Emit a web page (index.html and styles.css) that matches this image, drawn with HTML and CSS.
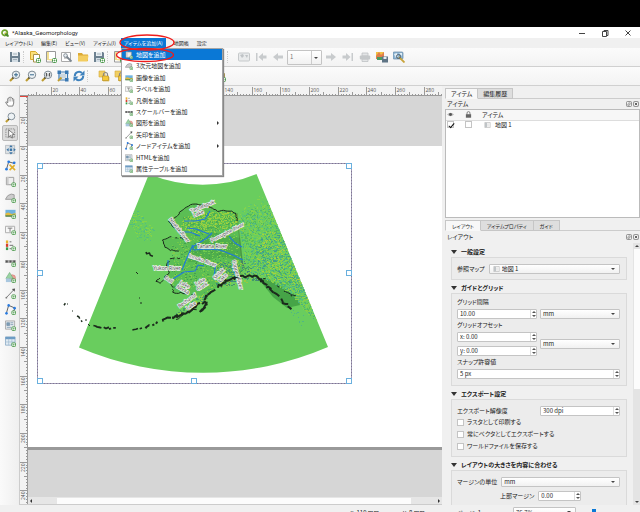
FILE: index.html
```html
<!DOCTYPE html>
<html lang="ja">
<head>
<meta charset="utf-8">
<title>*Alaska_Geomorphology</title>
<link rel="stylesheet" href="styles.css">
</head>
<body>
<svg class="sprite" aria-hidden="true">
  <defs>
    <symbol id="plus" viewBox="0 0 12 12"><rect x="7.5" y="7.5" width="4" height="4" rx="1" fill="#fff" stroke="#4d9a4d"/><path d="M9.5 8.5v2M8.500 9.500h2" stroke="#4d9a4d" stroke-width=".7"/></symbol>
    <symbol id="save" viewBox="0 0 12 12"><path d="M1 1h9l1 1v9H1z" fill="#6d8190"/><rect x="3" y="1" width="6" height="4" fill="#e8eef2"/><rect x="3" y="7" width="6" height="4" fill="#d3dde4"/><path d="M4 8.500h4M4 3h4" stroke="#8b9ba7" stroke-width=".7"/></symbol>
    <symbol id="newdoc" viewBox="0 0 12 12"><path d="M1.500 .5h5l2 2v6h-7z" fill="#fbe07a" stroke="#d9ac2c"/><path d="M4.500 3.500h6v7.500h-6z" fill="#fff" stroke="#a8924b"/><use href="#plus"/></symbol>
    <symbol id="page" viewBox="0 0 12 12"><path d="M1.500 .5h9v10.500h-9z" fill="#fff" stroke="#999"/><path d="M2 9V1h2v7h6v2z" fill="#f2df92"/><use href="#plus"/></symbol>
    <symbol id="manager" viewBox="0 0 12 12"><path d="M.5 1.500h9v9h-9z" fill="#fff" stroke="#aaa"/><path d="M3 4h4v4H3z" fill="#ccc"/><path d="M5 5l5.500 5.500" stroke="#7d8790" stroke-width="1.800"/><circle cx="4.500" cy="4.500" r="1.800" fill="#e8eef2" stroke="#858f98"/></symbol>
    <symbol id="folder" viewBox="0 0 12 12"><path d="M1 2h4l1 1.500h5V10H1z" fill="#dca934"/><path d="M1 4.500h10.500L10.500 10.500H1z" fill="#f3cd60"/></symbol>
    <symbol id="zoom" viewBox="0 0 12 12"><path d="M1 11l3.500-3.500" stroke="#bd9c32" stroke-width="2.200"/><path d="M3.500 8.500l1.200-1.200" stroke="#333" stroke-width="1.500"/><circle cx="7" cy="4.800" r="3.700" fill="#edf2f5" stroke="#7c8993"/></symbol>
    <symbol id="zoomin" viewBox="0 0 12 12"><use href="#zoom"/><path d="M5 4.800h4M7 2.800v4" stroke="#36688d"/></symbol>
    <symbol id="zoomout" viewBox="0 0 12 12"><use href="#zoom"/><path d="M5 4.800h4" stroke="#36688d"/></symbol>
    <symbol id="zoomone" viewBox="0 0 12 12"><use href="#zoom"/><path d="M5.400 3v3.500M8.600 3v3.500M7 3.800v.7M7 5.500v.7" stroke="#333" stroke-width=".9"/></symbol>
    <symbol id="full" viewBox="0 0 12 12"><path d="M3 3.500h6v5H3z" fill="#c9d6e0"/><path d="M3 2h6M3 10h6M2 3v6M10.500 3v6" stroke="#3a79b3" stroke-width="1.200"/><path d="M.5.500h3.500v3.500H.5zM8 .5h3.500v3.500H8zM8 8h3.500v3.500H8z" fill="#3a79b3"/><path d="M1 11l3.500-3.500" stroke="#bd9c32" stroke-width="2"/></symbol>
    <symbol id="refresh" viewBox="0 0 12 12"><path d="M1.800 6A4.200 4.200 0 0 1 9 3M10.200 6A4.200 4.200 0 0 1 3 9" fill="none" stroke="#3f82bd" stroke-width="2"/><path d="M11.500.5v5h-5zM.5 11.500v-5h5z" fill="#3f82bd"/></symbol>
    <symbol id="lock" viewBox="0 0 12 12"><path d="M1 1h6v6H1zM5 7h6v4H5z" fill="#f1cf63" stroke="#d3aa38" stroke-width=".6"/><path d="M5.500 6V4.500a2 2 0 0 1 4 0V6" fill="none" stroke="#888" stroke-width="1.200"/><rect x="4.500" y="6" width="6" height="4.500" fill="#f4c93b" stroke="#b58e29" stroke-width=".6"/></symbol>
    <symbol id="padlock" viewBox="0 0 12 12"><path d="M3.500 6V3.500a2.500 2.500 0 0 1 5 0V6" fill="none" stroke="#777" stroke-width="1.500"/><rect x="1.500" y="5.500" width="9" height="6" fill="#666"/></symbol>
    <symbol id="eye" viewBox="0 0 12 12"><path d="M0 6q6-6 12 0q-6 6-12 0z" fill="#b9b9b9"/><circle cx="6" cy="6" r="2.500" fill="#555"/></symbol>
    <symbol id="atlas" viewBox="0 0 12 12"><rect x=".5" y="2" width="11" height="8" rx="1" fill="#e9ebec" stroke="#c6c9cb"/><path d="M2 4l3-1 1 2-2 2zM7 4h3l-1 3z" fill="#bfc3c6"/></symbol>
    <symbol id="next" viewBox="0 0 12 12"><path d="M1 4.500h5V2l5 4-5 4V7.500H1z" fill="#c8cbcd"/></symbol>
    <symbol id="prev" viewBox="0 0 12 12"><path d="M11 4.500H6V2L1 6l5 4V7.500h5z" fill="#c8cbcd"/></symbol>
    <symbol id="first" viewBox="0 0 12 12"><path d="M11.500 4.500H8V2L3.500 6 8 10V7.500h3.500zM1 2h1.500v8H1z" fill="#c8cbcd"/></symbol>
    <symbol id="last" viewBox="0 0 12 12"><path d="M.5 4.500H4V2l4.500 4L4 10V7.500H.5zM9.500 2H11v8H9.500z" fill="#c8cbcd"/></symbol>
    <symbol id="print" viewBox="0 0 12 12"><path d="M3 2h6v3H3zM3 8h6v2.500H3z" fill="#e3e5e6" stroke="#bfc2c4" stroke-width=".8"/><rect x=".8" y="4.500" width="10.400" height="4" rx="1" fill="#c5c8ca"/></symbol>
    <symbol id="export" viewBox="0 0 12 12"><path d="M0 1h8v7H0z" fill="#f2c143"/><path d="M0 5l3-4 2 3 3-3v7H0z" fill="#e07e4b"/><path d="M1 6h6v3H1z" fill="#4b9c62"/><rect x="6" y="5.500" width="6" height="6" fill="#5f7485"/><rect x="7.500" y="6" width="3" height="2" fill="#e6edf1"/></symbol>
    <symbol id="atlasset" viewBox="0 0 12 12"><rect x="0" y="1" width="10" height="7" rx="1" fill="#8fb6d4" stroke="#6488a3" stroke-width=".7"/><path d="M1 3l3-1 1 3-2 2zM6 2h3v3z" fill="#e1edf4"/><path d="M6 6l5.500 5.500" stroke="#c9a43b" stroke-width="1.800"/><circle cx="5.500" cy="5.500" r="2" fill="none" stroke="#53626d"/></symbol>
    <symbol id="hand" viewBox="0 0 12 12"><path d="M3.500 11L1 7.500q-.6-1.200.6-1L3 7.500V2.800q.7-1 1.300 0L4.800 1.500q.8-.9 1.300 0l.5.500q.8-.8 1.300.2l.3 1.100q1-.6 1.300.4v4L8.500 11z" fill="#fff" stroke="#555" stroke-width=".8"/><path d="M4.500 3v3M6.200 2v4M8 3v3" stroke="#666" stroke-width=".5"/></symbol>
    <symbol id="select" viewBox="0 0 12 12"><rect x="1" y="1" width="9.500" height="9" fill="none" stroke="#888" stroke-dasharray="1.500 1"/><path d="M4 2v8l2-2 1.500 3 1.300-.7L7.500 7.500 10 7z" fill="#fff" stroke="#555" stroke-width=".8"/></symbol>
    <symbol id="move" viewBox="0 0 12 12"><path d="M.5 1.500h10v9H.5z" fill="#dce1e4" stroke="#a4abb0" stroke-width=".7"/><path d="M6.500 1l2 2.500h-4zM6.500 11.500l2-2.500h-4zM1.500 6.300l2.500-2v4zM11.800 6.300l-2.500-2v4zM5.200 5h2.600v2.600H5.200z" fill="#3c74a5"/></symbol>
    <symbol id="editnode" viewBox="0 0 12 12"><path d="M1.500 10.500L4 2l7 2" fill="none" stroke="#555"/><circle cx="4" cy="2" r="1.500" fill="#287ae0"/><circle cx="1.600" cy="10" r="1.500" fill="#287ae0"/><circle cx="10" cy="3" r="1.500" fill="#287ae0"/><path d="M5 5l6 6M10.500 5.500L5 11" stroke="#e0ae2a" stroke-width="1.800"/></symbol>
    <symbol id="map" viewBox="0 0 12 12"><path d="M1.500 1.500h8v8h-8z" fill="#eee" stroke="#999"/><path d="M3 1v8" stroke="#ccc" stroke-width="2"/><use href="#plus"/></symbol>
    <symbol id="map3d" viewBox="0 0 12 12"><path d="M.5 8L3 4q4-3 7-1v5z" fill="#ccc" stroke="#999"/><use href="#plus"/></symbol>
    <symbol id="picture" viewBox="0 0 12 12"><rect x=".5" y="2" width="11" height="7" fill="#6fb2de"/><path d="M.5 6l3-1 4 1.500 4-1V9H.5z" fill="#e2bb40"/><path d="M.5 8h11v1.500H.5z" fill="#4c804f"/><use href="#plus"/></symbol>
    <symbol id="label" viewBox="0 0 12 12"><path d="M.5 2.500h10v7H.5z" fill="#f7f7f7" stroke="#aaa"/><path d="M3 4.500h5M5.500 4.500v4" stroke="#777"/><use href="#plus"/></symbol>
    <symbol id="legend" viewBox="0 0 12 12"><path d="M1 .5h2.500v3H1z" fill="#e8b42c"/><path d="M1 4h2.500v3.500H1z" fill="#d6402b"/><path d="M1 8h2.500v3H1z" fill="#3a9c4b"/><path d="M5 2h2M5 5.800h4M5 9.500h2" stroke="#666"/><use href="#plus"/></symbol>
    <symbol id="scalebar" viewBox="0 0 12 12"><path d="M0 4.500h12v3H0z" fill="#aaa"/><path d="M1 5h2v2H1zM5 5h2v2H5zM9 5h2v2H9z" fill="#555"/><use href="#plus"/></symbol>
    <symbol id="shape" viewBox="0 0 12 12"><circle cx="8" cy="6.500" r="3.500" fill="#eba29a" stroke="#c96a62" stroke-width=".5"/><path d="M5 .5L9 7H1z" fill="#9bd4a4" stroke="#62a56c" stroke-width=".6"/><path d="M1 7h6v4H1z" fill="#a9c7df"/><use href="#plus"/></symbol>
    <symbol id="arrow" viewBox="0 0 12 12"><path d="M1.500 10.500l8.500-9" stroke="#777"/><path d="M11 .5L10.500 4 7.500 1z" fill="#555"/><circle cx="1.500" cy="10.500" r="1" fill="#777"/><use href="#plus"/></symbol>
    <symbol id="node" viewBox="0 0 12 12"><path d="M1.500 10L4 1.500l7 3-2.500 5" fill="none" stroke="#555"/><circle cx="4" cy="1.500" r="1.400" fill="#287ae0"/><circle cx="1.600" cy="10.200" r="1.400" fill="#287ae0"/><circle cx="10.500" cy="4.500" r="1.400" fill="#287ae0"/><use href="#plus"/></symbol>
    <symbol id="html" viewBox="0 0 12 12"><path d="M.5 1h10v9H.5z" fill="#e4e9ed" stroke="#999" stroke-width=".8"/><path d="M2 3h3v3H2zM6 3h3M6 5h3M2 8h5" stroke="#7593ab" fill="#7c9cb5" stroke-width=".8"/><use href="#plus"/></symbol>
    <symbol id="table" viewBox="0 0 12 12"><path d="M.5 1h10.500v9H.5z" fill="#e1ebf3" stroke="#7fa3c1" stroke-width=".8"/><path d="M.5 1h10.500v2.500H.5z" fill="#6d9cc4"/><path d="M4 3v7M7.500 3v7M.5 6.500H11" stroke="#9db9ce" stroke-width=".7"/><use href="#plus"/></symbol>
    <symbol id="mapitem" viewBox="0 0 12 12"><path d="M.5 1h11v10H.5z" fill="#f4f4f4" stroke="#aaa"/><path d="M1 1.500h4v9H1z" fill="#bfc4c7"/><path d="M7 3v6" stroke="#ccc"/></symbol>
    <symbol id="float" viewBox="0 0 12 12"><rect x="1" y="1" width="10" height="10" rx="2" fill="none" stroke="#777" stroke-width="1.500"/><path d="M3.500 6h3v3h-3zM5.500 5.500V3.500h3v3h-2" fill="none" stroke="#777"/></symbol>
    <symbol id="close" viewBox="0 0 12 12"><rect x="1" y="1" width="10" height="10" rx="2" fill="none" stroke="#777" stroke-width="1.500"/><path d="M3.500 3.500l5 5M8.500 3.500l-5 5" stroke="#555" stroke-width="1.800"/></symbol>
  </defs>
</svg>

<div class="app">
  <div class="letterbox"></div>
  <header class="titlebar">
    <svg class="logo" viewBox="0 0 12 12"><circle cx="5.500" cy="5.800" r="4" fill="#fff" stroke="#6fa52f" stroke-width="2.600"/><path d="M5.500 5.500h2.700l3.300 3.500v2.500H9L5.500 8z" fill="#4c8a2c"/><path d="M5.500 5.500h2l1 1-3 1z" fill="#e6c62c"/></svg>
    <h1>*Alaska_Geomorphology</h1>
    <div class="window-buttons">
      <button aria-label="最小化"><svg viewBox="0 0 8 8"><path d="M1 4.500h6" stroke="#444"/></svg></button>
      <button aria-label="元に戻す"><svg viewBox="0 0 8 8"><path d="M1.500 2.500h4v5h-4zM3 2.500v-1h4v5H5.500" fill="none" stroke="#444"/></svg></button>
      <button aria-label="閉じる"><svg viewBox="0 0 8 8"><path d="M1.500 1.500l5 5M6.500 1.500l-5 5" stroke="#444"/></svg></button>
    </div>
  </header>

  <nav class="menubar">
    <button>レイアウト(L)</button>
    <button>編集(E)</button>
    <button>ビュー(V)</button>
    <button>アイテム(I)</button>
    <div class="menu-anchor">
      <button class="open">アイテムを追加(A)</button>
      <div class="dropdown">
        <button class="current"><svg><use href="#map"/></svg>地図を追加</button>
        <button><svg><use href="#map3d"/></svg>3次元地図を追加</button>
        <button><svg><use href="#picture"/></svg>画像を追加</button>
        <button><svg><use href="#label"/></svg>ラベルを追加</button>
        <button><svg><use href="#legend"/></svg>凡例を追加</button>
        <button><svg><use href="#scalebar"/></svg>スケールバーを追加</button>
        <button class="submenu"><svg><use href="#shape"/></svg>図形を追加</button>
        <button><svg><use href="#arrow"/></svg>矢印を追加</button>
        <button class="submenu"><svg><use href="#node"/></svg>ノードアイテムを追加</button>
        <button><svg><use href="#html"/></svg>HTMLを追加</button>
        <button><svg><use href="#table"/></svg>属性テーブルを追加</button>
      </div>
      <svg class="rings" viewBox="0 0 62 30"><ellipse cx="32" cy="8.500" rx="27" ry="7.500"/><ellipse cx="30" cy="21" rx="28.500" ry="6.500"/></svg>
    </div>
    <button>地図帳</button>
    <button>設定</button>
  </nav>

  <div class="toolbar">
    <div class="group">
      <button aria-label="保存"><svg><use href="#save"/></svg></button><i class="sep"></i>
      <button aria-label="新規"><svg><use href="#newdoc"/></svg></button>
      <button aria-label="複製"><svg><use href="#page"/></svg></button>
      <button aria-label="管理"><svg><use href="#manager"/></svg></button>
      <button aria-label="開く"><svg><use href="#folder"/></svg></button>
      <button aria-label="テンプレート保存"><svg><use href="#save"/><use href="#plus"/></svg></button><i class="sep"></i>
      <button aria-label="ページ"><svg><use href="#page"/></svg></button>
      <button aria-label="印刷"><svg><use href="#print"/></svg></button>
      <button aria-label="画像"><svg><use href="#picture"/></svg></button><i class="sep"></i>
      <button aria-label="SVG"><svg><use href="#export"/></svg></button>
      <button aria-label="PDF"><svg><use href="#page"/></svg></button>
      <button aria-label="戻す"><svg><use href="#prev"/></svg></button>
      <button aria-label="やり直す"><svg><use href="#next"/></svg></button><i class="sep wide"></i>
    </div>
    <div class="group atlas">
      <button aria-label="地図帳プレビュー"><svg><use href="#atlas"/></svg></button>
      <button aria-label="最初"><svg><use href="#first"/></svg></button>
      <button aria-label="前"><svg><use href="#prev"/></svg></button>
      <span class="select page-select"><select aria-label="ページ"><option>1</option></select></span>
      <button aria-label="次"><svg><use href="#next"/></svg></button>
      <button aria-label="最後"><svg><use href="#last"/></svg></button>
      <button aria-label="地図帳印刷"><svg><use href="#print"/></svg></button>
      <button aria-label="エクスポート"><svg><use href="#export"/></svg></button>
      <button aria-label="地図帳設定"><svg><use href="#atlasset"/></svg></button>
    </div>
  </div>
  <div class="toolbar">
    <div class="group">
      <button aria-label="拡大"><svg><use href="#zoomin"/></svg></button>
      <button aria-label="縮小"><svg><use href="#zoomout"/></svg></button>
      <button aria-label="100%"><svg><use href="#zoomone"/></svg></button>
      <button aria-label="全体"><svg><use href="#full"/></svg></button>
      <button aria-label="更新"><svg><use href="#refresh"/></svg></button><i class="sep wide"></i>
      <button aria-label="ロック"><svg><use href="#lock"/></svg></button>
      <button aria-label="ロック解除"><svg><use href="#lock"/></svg></button>
      <button aria-label="グループ化"><svg><use href="#shape"/></svg></button>
      <button aria-label="グループ解除"><svg><use href="#shape"/></svg></button><i class="sep"></i>
      <button aria-label="前面へ"><svg><use href="#newdoc"/></svg></button>
      <button aria-label="背面へ"><svg><use href="#newdoc"/></svg></button>
      <button aria-label="整列"><svg><use href="#newdoc"/></svg></button>
      <button aria-label="配布"><svg><use href="#newdoc"/></svg></button>
    </div>
  </div>

  <main class="workspace">
    <div class="tools">
      <button aria-label="パン"><svg><use href="#hand"/></svg></button>
      <button aria-label="ズーム"><svg><use href="#zoom"/></svg></button>
      <button class="active" aria-label="選択"><svg><use href="#select"/></svg></button>
      <button aria-label="内容を移動"><svg><use href="#move"/></svg></button>
      <button aria-label="ノード編集"><svg><use href="#editnode"/></svg></button>
      <button aria-label="地図"><svg><use href="#map"/></svg></button>
      <button aria-label="3D地図"><svg><use href="#map3d"/></svg></button>
      <button aria-label="画像"><svg><use href="#picture"/></svg></button>
      <button aria-label="ラベル"><svg><use href="#label"/></svg></button>
      <button aria-label="凡例"><svg><use href="#legend"/></svg></button>
      <button aria-label="スケールバー"><svg><use href="#scalebar"/></svg></button>
      <button aria-label="図形"><svg><use href="#shape"/></svg></button>
      <button aria-label="矢印"><svg><use href="#arrow"/></svg></button>
      <button aria-label="ノード"><svg><use href="#node"/></svg></button>
      <button aria-label="HTML"><svg><use href="#html"/></svg></button>
      <button aria-label="属性テーブル"><svg><use href="#table"/></svg></button>
    </div>

    <section class="view">
      <svg class="ruler-h" id="ruler-h"></svg>
      <svg class="ruler-v" id="ruler-v"></svg>
      <div class="canvas">
        <div class="paper">
          <svg class="map" viewBox="37 163 315 221">
            <defs>
              <clipPath id="wedge"><path d="M149 174A140 140 0 0 0 256.500 174L328 347A317 317 0 0 1 79 347.500z"/></clipPath>
            </defs>
            <path d="M149 174A140 140 0 0 0 256.500 174L328 347A317 317 0 0 1 79 347.500z" fill="#69cd5e"/>
            <path id="land" d="M237 213L230 211 218 211 212 208 202 205 195 204 187 207 180 212 177 217 169 221 173 227 180 233 183 238 172 237 162 240 165 247 170 250 180 251 180 258 172 258 168 262 167 267 169 273 165 277 172 285 173 293 183 293 193 295 204 296 217 287 228 280 240 277 243 270z" fill="#5bbe54"/>
            <path d="M192 247L212 232 240 238 243 262 220 256 205 262 188 262z" fill="#4fae4c"/>
            <path d="M257 277L273 281 287 290 298 298 300 305 287 308 273 297 265 287z" fill="#46a447"/>
            <g id="terrain" clip-path="url(#wedge)" fill="none" stroke-width="1"></g>
            <path d="M237 213L242 262 246 271" fill="none" stroke="#497d3f" stroke-width=".6"/>
            <g id="coast" fill="none" stroke="#1b2a1c" stroke-linejoin="round"></g>
            <g class="rivers">
              <path d="M182 270L187 258 192 247 199 243 207 238 212 233"/>
              <path d="M192 245L194 250 207 249 220 250 233 255 243 260"/>
              <path d="M173 279L184 272 195 271 198 265 204 266"/>
              <path d="M229 236L235 243 242 247"/>
              <path d="M184 221L196 221 205 219 210 211"/>
              <path d="M178 232L190 232 200 236"/>
              <path d="M187 228L196 229 209 234" />
              <path d="M214 276L216 264M233 268L236 276M168 266v-6"/>
            </g>
            <g class="map-labels">
              <text transform="translate(203 208) rotate(-22)">Teshekpuk</text>
              <text transform="translate(199 215) rotate(-22)">Lake</text>
              <text transform="translate(178 231) rotate(52)">Noatak River</text>
              <text transform="translate(228 234) rotate(-27)">Porcupine River</text>
              <text transform="translate(212 248)">Tanana River</text>
              <text transform="translate(202 262) rotate(20)">Innoko River</text>
              <text transform="translate(167 270)">Yukon River</text>
              <text transform="translate(236 275) rotate(76)">Copper River</text>
              <text transform="translate(168 281) rotate(35)">Dall</text>
              <text transform="translate(184 286) rotate(30)">Lake</text>
              <text transform="translate(182 291) rotate(30)">Nerka</text>
              <text transform="translate(201 283) rotate(-30)">Lake</text>
              <text transform="translate(203 288) rotate(-30)">Clark</text>
              <text transform="translate(220 275) rotate(-45)">Skilak</text>
              <text transform="translate(224 279) rotate(-45)">Lake</text>
              <text transform="translate(188 302) rotate(-35)">Becharof</text>
              <text transform="translate(192 307) rotate(-35)">Lake</text>
            </g>
            <rect x="37.500" y="163.500" width="314" height="220" fill="none" stroke="#c3bcdc"/>
            <rect x="37.500" y="163.500" width="314" height="220" fill="none" stroke="#7d7690" stroke-dasharray="2 1"/>
            <g class="handles">
              <rect x="37.500" y="163.500" width="5" height="5"/><rect x="191.500" y="163.500" width="5" height="5"/><rect x="346.500" y="163.500" width="5" height="5"/>
              <rect x="37.500" y="270.500" width="5" height="5"/><rect x="346.500" y="270.500" width="5" height="5"/>
              <rect x="37.500" y="378.500" width="5" height="5"/><rect x="191.500" y="378.500" width="5" height="5"/><rect x="346.500" y="378.500" width="5" height="5"/>
            </g>
          </svg>
        </div>
      </div>
      <div class="hscroll"><b class="left"></b><i></i><b class="right"></b></div>
    </section>

    <aside class="side">
      <section class="dock items">
        <div class="tabs"><button class="on">アイテム</button><button>編集履歴</button></div>
        <div class="dock-title"><h2>アイテム</h2><button aria-label="分離"><svg><use href="#float"/></svg></button><button aria-label="閉じる"><svg><use href="#close"/></svg></button></div>
        <div class="tree">
          <table>
            <thead><tr><th class="c1"><svg><use href="#eye"/></svg></th><th class="c2"><svg><use href="#padlock"/></svg></th><th>アイテム</th></tr></thead>
            <tbody><tr><td class="c1"><input type="checkbox" checked aria-label="表示"></td><td><input type="checkbox" aria-label="ロック"></td><td><span class="item"><svg><use href="#mapitem"/></svg>地図 1</span></td></tr></tbody>
          </table>
        </div>
      </section>
      <section class="dock props">
        <div class="tabs"><button class="on">レイアウト</button><button>アイテムプロパティ</button><button>ガイド</button></div>
        <div class="dock-title"><h2>レイアウト</h2><button aria-label="分離"><svg><use href="#float"/></svg></button><button aria-label="閉じる"><svg><use href="#close"/></svg></button></div>
        <div class="scroller">
          <form class="form">
            <h3>一般設定</h3>
            <div class="box">
              <div class="row"><label for="ref">参照マップ</label><span class="select grow with-icon"><svg><use href="#mapitem"/></svg><select id="ref"><option>地図 1</option></select></span></div>
            </div>
            <h3>ガイドとグリッド</h3>
            <div class="box grid">
              <label class="cap" for="gs">グリッド間隔</label>
              <span class="spin"><input id="gs" value="10.00"><i></i></span>
              <span class="select"><select aria-label="単位"><option>mm</option></select></span>
              <label class="cap" for="ox">グリッドオフセット</label>
              <div class="stack">
                <span class="spin"><input id="ox" value="x: 0.00"><i></i></span>
                <span class="spin"><input aria-label="y" value="y: 0.00"><i></i></span>
              </div>
              <span class="select"><select aria-label="オフセット単位"><option>mm</option></select></span>
              <label class="cap" for="snap">スナップ許容値</label>
              <span class="spin full"><input id="snap" value="5 px"><i></i></span>
            </div>
            <h3>エクスポート設定</h3>
            <div class="box export">
              <div class="row between"><label for="dpi">エクスポート解像度</label><span class="spin dpi"><input id="dpi" value="300 dpi"><i></i></span></div>
              <label class="check"><input type="checkbox">ラスタとして印刷する</label>
              <label class="check"><input type="checkbox">常にベクタとしてエクスポートする</label>
              <label class="check"><input type="checkbox">ワールドファイルを保存する</label>
            </div>
            <h3>レイアウトの大きさを内容に合わせる</h3>
            <div class="box margins">
              <div class="row"><label for="mu">マージンの単位</label><span class="select grow"><select id="mu"><option>mm</option></select></span></div>
              <div class="row center"><label for="tm">上部マージン</label><span class="spin small"><input id="tm" value="0.00"><i></i></span></div>
            </div>
          </form>
          <div class="vscroll"><b class="up"></b><i></i><b class="down"></b></div>
        </div>
      </section>
    </aside>
  </main>

  <footer class="status">
    <div class="status-inner">
      <span>x: 119 mm</span><span>y: 8 mm</span><span class="page-no">ページ: 1</span>
      <span class="select"><select aria-label="縮尺"><option>76.7%</option></select></span>
      <input type="range" aria-label="ズーム" value="8">
    </div>
  </footer>
</div>
<script src="app.js"></script>
</body>
</html>
```
FILE: styles.css
```css
* { box-sizing: border-box; }
body {
  margin: 0;
  overflow: hidden;
  background: #f0f0f0;
  color: #222;
  font: 6px/8px "Noto Sans CJK JP", "Liberation Sans", sans-serif;
  font-feature-settings: "palt";
}
button, input, select {
  margin: 0;
  padding: 0;
  border: 0;
  background: none;
  color: inherit;
  font: inherit;
  font-feature-settings: inherit;
  white-space: nowrap;
}
h1, h2, h3 { margin: 0; font-size: 6px; font-weight: 400; }
.sprite { position: absolute; width: 0; height: 0; }
.app { display: flex; flex-direction: column; height: 100vh; }
.letterbox { flex: 0 0 27px; background: #000; }

.titlebar { flex: 0 0 11px; display: flex; align-items: center; gap: 3px; padding-left: 1px; background: #fff; }
.titlebar h1 { font-family: Roboto, sans-serif; }
.logo { width: 8px; height: 8px; }
.window-buttons { display: flex; gap: 15px; margin-left: auto; padding-right: 8px; }
.window-buttons button { width: 8px; height: 8px; display: flex; }
.window-buttons svg { width: 8px; height: 8px; }

.menubar { flex: 0 0 10px; display: flex; padding-left: 1px; background: #f0f0f0; }
.menubar > button, .menu-anchor > button { height: 10px; padding: 0 4px; font-size: 5px; line-height: 10px; }
.menu-anchor { position: relative; margin: 0 4px 0 1px; }
.menu-anchor > .open { padding: 0 3px; background: #0a78d6; color: #fff; }
.dropdown {
  position: absolute;
  z-index: 5;
  top: 10px;
  left: 0;
  width: 102px;
  height: 128px;
  display: grid;
  grid-auto-rows: 1fr;
  background: #fff;
  border: 1px solid #a5a5a5;
  box-shadow: 1px 1px 1px #888;
}
.dropdown button { position: relative; display: flex; align-items: center; gap: 3px; padding-left: 3px; text-align: left; }
.dropdown svg { width: 8px; height: 8px; }
.dropdown .current { background: #0a78d6; color: #fff; }
.dropdown .submenu::after { content: ""; margin-left: auto; margin-right: 3px; border: 2px solid transparent; border-left-color: #333; border-right: 0; }
.rings { position: absolute; z-index: 6; left: -6px; top: -4px; width: 62px; height: 30px; pointer-events: none; }
.rings ellipse { fill: none; stroke: #ee1c1c; stroke-width: 1.4; }

.toolbar { flex: 0 0 19px; display: flex; align-items: center; padding-left: 7px; background: linear-gradient(#fbfbfb, #f3f3f3); border-bottom: 1px solid #d0d0d0; }
.group { display: flex; align-items: center; }
.group.atlas { gap: 1px; }
.group button { width: 16px; height: 16px; display: flex; align-items: center; justify-content: center; }
.group svg { width: 12px; height: 12px; }
.sep { width: 4px; height: 12px; border-left: 1px dotted #ccc; }
.sep.wide { width: 9px; }

.select { position: relative; display: flex; height: 10px; background: linear-gradient(#fff, #f1f1f1); border: 1px solid #c4c4c4; border-radius: 1px; }
.select::after { content: ""; position: absolute; right: 4px; top: 3px; border: 2px solid transparent; border-top-color: #444; border-bottom: 0; pointer-events: none; }
.select select { appearance: none; width: 100%; padding-left: 2px; line-height: 8px; }
.page-select { width: 35px; height: 15px; align-items: center; color: #777; }
.page-select::after { top: 6px; right: 3px; }
.page-select::before { content: ""; position: absolute; right: 9px; top: 0; bottom: 0; border-left: 1px solid #ccc; }

.workspace { flex: 1; display: flex; min-height: 0; }
.tools { width: 20px; padding: 7px 2px 0; background: linear-gradient(90deg, #fafafa, #efefef); border-right: 1px solid #ccc; }
.tools button { width: 16px; height: 16px; display: flex; align-items: center; justify-content: center; }
.tools .active { background: #dcdcdc; border: 1px solid #b9b9b9; border-radius: 2px; }
.tools svg { width: 11px; height: 11px; flex: none; }

.view { flex: 1; min-width: 0; display: grid; grid-template: 10px 1fr 7px / 8px 1fr; background: #f3f3f3; border-bottom: 1px solid #ccc; }
.ruler-h { grid-area: 1 / 1 / 2 / 3; width: 100%; height: 10px; }
.ruler-v { grid-area: 2 / 1 / 4 / 2; width: 8px; height: 100%; }
.ruler-h path, .ruler-v path { stroke: #999; fill: none; }
.ruler-h text, .ruler-v text { font: 5px "Open Sans", sans-serif; fill: #555; }
.ruler-v .cursor { stroke: #e0453c; }
.canvas { grid-area: 2 / 2; overflow: hidden; padding-top: 50px; background: #d6d6d6; }
.paper { height: 304px; padding: 17px 0 0 9px; background: #fff; border-bottom: 3px solid #999; }
.map { display: block; width: 315px; height: 221px; }
.rivers { fill: none; stroke: #1f78df; stroke-width: 1.1; }
.map-labels { font: 5px "Open Sans", sans-serif; fill: #444; stroke: #f2f2f2; stroke-width: 1.4; paint-order: stroke; text-anchor: middle; }
.handles rect { fill: #fff; stroke: #6ab0de; }
.hscroll { grid-area: 3 / 2; display: flex; align-items: center; background: #e6e6e6; }
.hscroll i { flex: 1; height: 6px; margin: 0 25px 0 23px; background: #fcfcfc; }
.hscroll b { margin: 0 2px; border: 2px solid transparent; }
.hscroll .left { border-right-color: #333; border-left: 0; }
.hscroll .right { border-left-color: #333; border-right: 0; }

.side { width: 198px; padding: 2px 0 0 3px; display: flex; flex-direction: column; background: #f0f0f0; }
.tabs { display: flex; height: 11px; border-bottom: 1px solid #ccc; }
.tabs button { height: 11px; padding: 0 5px; background: #dedede; border: 1px solid #c6c6c6; border-left-width: 0; }
.tabs .on { background: #f8f8f8; border-left-width: 1px; border-bottom-color: #f8f8f8; }
.props .tabs button { padding: 0 6px; font-size: 5px; }
.dock-title { display: flex; align-items: center; height: 10px; padding: 0 1px 0 2px; gap: 1px; }
.dock-title h2 { margin-right: auto; }
.dock-title button { width: 6px; height: 6px; display: flex; }
.dock-title svg { width: 6px; height: 6px; }
.items { flex: 0 0 132px; }
.tree { height: 109px; background: #fff; border: 1px solid #bbb; }
.tree table { width: 100%; border-collapse: collapse; }
.tree th { height: 10px; padding: 0; font-weight: 400; text-align: left; background: #f7f7f7; border-bottom: 1px solid #ddd; }
.tree td { height: 9px; padding: 0; }
.tree th svg { display: block; width: 7px; height: 7px; }
.tree .c1 { width: 19px; padding-left: 1px; }
.tree .c2 { width: 17px; }
.tree input { display: block; }
.item { display: flex; align-items: center; gap: 4px; padding-left: 2px; }
.item svg { width: 7px; height: 6px; }
input[type="checkbox"] { appearance: none; width: 7px; height: 7px; background: #fff; border: 1px solid #c4c4c4; }
input[type="checkbox"]:checked::after { content: ""; display: block; width: 2px; height: 5px; margin-left: 2px; border: solid #111; border-width: 0 1px 1px 0; transform: rotate(40deg); }

.props { flex: 1; min-height: 0; display: flex; flex-direction: column; }
.props .tabs, .props .dock-title { flex: none; }
.props .dock-title { height: 12px; }
.scroller { flex: 1; min-height: 0; display: flex; overflow: hidden; }
.form { flex: 1; min-width: 0; padding: 1px 6px 0; }
.form h3 { display: flex; align-items: center; gap: 4px; height: 10px; margin-top: 3px; font-weight: 700; }
.form h3::before { content: ""; border: 3px solid transparent; border-top: 4px solid #333; border-bottom: 0; }
.box { padding: 6px 6px 5px 5px; background: #ececec; border: 1px solid #dadada; }
.row { display: flex; align-items: center; gap: 4px; height: 10px; }
.row.between { justify-content: space-between; }
.row.center { margin-top: 4px; padding-left: 43px; }
.grow { flex: 1; }
.with-icon svg { width: 7px; height: 6px; margin: 1px 0 0 3px; flex: none; }
.box.grid { display: grid; grid-template-columns: 1fr 1fr; column-gap: 3px; align-items: center; padding-top: 2px; padding-bottom: 6px; }
.cap { grid-column: 1 / 3; height: 13px; padding-top: 2px; }
.stack { display: grid; gap: 4px; }
.spin { position: relative; display: flex; height: 10px; background: #fff; border: 1px solid #c4c4c4; border-radius: 1px; }
.spin input { flex: 1; min-width: 0; padding-left: 2px; }
.spin i { position: relative; width: 6px; border-left: 1px solid #ddd; }
.spin i::before, .spin i::after { content: ""; position: absolute; left: 1px; border: 2px solid transparent; }
.spin i::before { top: 1px; border-bottom-color: #555; border-top: 0; }
.spin i::after { bottom: 1px; border-top-color: #555; border-bottom: 0; }
.spin.full { grid-column: 1 / 3; }
.spin.dpi { width: 80px; }
.spin.small { width: 43px; }
.box.export { padding-bottom: 4px; }
.check { display: flex; align-items: center; gap: 3px; height: 12px; }
.box.margins { height: 60px; }
.vscroll { width: 7px; display: flex; flex-direction: column; align-items: center; background: #e4e4e4; }
.vscroll b { margin: 2px 0; border: 2px solid transparent; }
.vscroll .up { border-bottom-color: #444; border-top: 0; }
.vscroll .down { border-top-color: #444; border-bottom: 0; }
.vscroll i { width: 6px; flex: 1; margin-bottom: 110px; background: #fcfcfc; }

.status { flex: 0 0 7px; overflow: hidden; }
.status-inner { display: flex; justify-content: flex-end; align-items: center; height: 15px; gap: 24px; padding: 0 2px 0 0; }
.status .page-no { margin-left: 8px; margin-right: 8px; }
.status .select { width: 63px; height: 12px; margin-right: -12px; }
.status input { appearance: none; width: 50px; height: 8px; background: linear-gradient(#ccc, #ccc) center / 100% 1px no-repeat; }
.status input::-webkit-slider-thumb { appearance: none; width: 4px; height: 8px; background: #0a78d6; }
```
FILE: app.js
```js
const NS = "http://www.w3.org/2000/svg";

function add(parent, name, attrs, text) {
  const el = document.createElementNS(NS, name);
  for (const key in attrs) el.setAttribute(key, attrs[key]);
  if (text !== undefined) el.textContent = text;
  parent.appendChild(el);
  return el;
}

// Rulers: 1.435 px per millimetre, a tick every 2 mm and a number every 20 mm.
const SCALE = 1.435;
const rulerH = document.getElementById("ruler-h");
const rulerV = document.getElementById("ruler-v");
const rulerWidth = rulerH.getBoundingClientRect().width;
const rulerHeight = rulerV.getBoundingClientRect().height;
let h = `M0 9.5h${rulerWidth}`;
for (let mm = 4; 2 + mm * SCALE < rulerWidth; mm += 2) {
  const x = Math.round(2 + mm * SCALE) + 0.5;
  const major = mm % 20 === 0;
  h += `M${x} 10V${major ? 1 : mm % 10 === 0 ? 6 : 8}`;
  if (major && x + 10 < rulerWidth) add(rulerH, "text", { x: x + 1, y: 6 }, mm);
}
add(rulerH, "path", { d: h });
let v = `M7.5 0v${rulerHeight}`;
for (let mm = -34; 50 + mm * SCALE < rulerHeight; mm += 2) {
  const y = Math.round(50 + mm * SCALE) + 0.5;
  const major = mm % 20 === 0;
  v += `M8 ${y}H${major ? 0 : mm % 10 === 0 ? 4 : 6}`;
  if (major && y + 10 < rulerHeight) add(rulerV, "text", { transform: `translate(5 ${y + 1}) rotate(-90)`, "text-anchor": "end" }, Math.abs(mm));
}
add(rulerV, "path", { d: v });
add(rulerV, "path", { d: "M0 .5h8", class: "cursor" });

// Repeatable random numbers, so the relief is the same on each load.
let seed = 7;
function rnd() {
  seed = (seed * 16807) % 2147483647;
  return seed / 2147483647;
}
function inside(x, y, poly) {
  let hit = false;
  for (let i = 0, j = poly.length - 1; i < poly.length; j = i++) {
    const [xi, yi] = poly[i], [xj, yj] = poly[j];
    if (yi > y !== yj > y && x < ((xj - xi) * (y - yi)) / (yj - yi) + xi) hit = !hit;
  }
  return hit;
}
const relief = [
  { poly: [[238, 218], [252, 208], [268, 204], [282, 228], [300, 270], [314, 308], [318, 322], [305, 312], [292, 296], [270, 281], [246, 273]], density: 0.42, colors: ["#86cf45", "#54bf7c", "#4bb07f", "#7fd24f", "#57bb57"] },
  { poly: [[262, 232], [284, 232], [300, 268], [312, 302], [296, 294], [250, 266]], density: 0.28, colors: ["#a9d03c", "#4bb283", "#429c85", "#8ccd44"] },
  { poly: [[239, 212], [262, 192], [275, 215], [268, 232], [240, 222]], density: 0.14, colors: ["#84d34c", "#5cc474"] },
  { poly: [[183, 217], [205, 212], [236, 212], [239, 224], [220, 230], [198, 234], [180, 228]], density: 0.5, colors: ["#8fce42", "#7bcb45", "#4bab53", "#9fd03e"] },
  { poly: [[172, 238], [236, 228], [243, 272], [214, 288], [172, 290]], density: 0.15, colors: ["#6fc94c", "#83cd4b", "#459f4d"] },
  { poly: [[212, 262], [246, 260], [258, 280], [216, 288]], density: 0.3, colors: ["#44877a", "#439a68", "#98c840"] },
  { poly: [[172, 316], [196, 298], [212, 286], [207, 299], [184, 312]], density: 0.35, colors: ["#98cf42", "#4a9f69"] },
  { poly: [[132, 203], [140, 215], [154, 228], [150, 242], [138, 240], [128, 222]], density: 0.22, colors: ["#83d44a", "#54bf7c"] },
  { poly: [[282, 305], [304, 312], [302, 326], [288, 312]], density: 0.08, colors: ["#50b784"] }
];
const terrain = document.getElementById("terrain");
for (const area of relief) {
  const paths = area.colors.map(() => "");
  const xs = area.poly.map(p => p[0]), ys = area.poly.map(p => p[1]);
  for (let y = Math.min(...ys); y < Math.max(...ys); y++) {
    for (let x = Math.min(...xs); x < Math.max(...xs); x++) {
      if (rnd() < area.density && inside(x, y, area.poly)) {
        paths[Math.floor(rnd() * paths.length)] += `M${x} ${y + 0.5}h${rnd() < 0.3 ? 2 : 1}`;
      }
    }
  }
  paths.forEach((d, i) => add(terrain, "path", { d, stroke: area.colors[i] }));
}

// Coastlines: each base line is broken into short jittered steps.
const coast = document.getElementById("coast");
function rough(points, width, jitter, gap) {
  let d = "";
  points.forEach(([x, y], i) => {
    if (!i) { d += `M${x} ${y}`; return; }
    const [px, py] = points[i - 1];
    const steps = Math.max(1, Math.round(Math.hypot(x - px, y - py) / 2));
    for (let s = 1; s <= steps; s++) {
      const cx = px + ((x - px) * s) / steps + (rnd() - 0.5) * jitter;
      const cy = py + ((y - py) * s) / steps + (rnd() - 0.5) * jitter;
      d += `${rnd() < gap ? "M" : "L"}${cx.toFixed(1)} ${cy.toFixed(1)}`;
    }
  });
  add(coast, "path", { d, "stroke-width": width });
}
rough([[237, 221], [236, 213], [230, 211], [218, 211], [212, 208], [202, 205], [195, 204], [187, 207], [180, 212], [177, 217], [169, 221], [173, 227], [180, 233], [183, 238], [172, 237], [162, 240], [165, 247], [170, 250], [180, 251]], 1, 1.4, 0.05);
rough([[180, 258], [172, 258], [168, 262], [167, 267], [169, 273], [165, 277], [172, 285], [173, 293], [183, 293], [193, 295]], 1, 1.8, 0.1);
rough([[160, 278], [156, 281], [160, 283], [164, 280]], 1, 1, 0);
rough([[204, 300], [208, 294], [217, 287], [228, 280], [240, 277]], 2, 3, 0.15);
rough([[240, 276], [257, 277], [266, 285], [274, 293], [284, 302], [290, 308]], 2, 3, 0.25);
rough([[257, 276], [270, 281], [283, 290], [299, 299]], 1, 3, 0.35);
rough([[202, 304], [207, 299], [204, 309], [200, 312], [206, 305]], 2, 3, 0.1);
rough([[200, 303], [190, 311], [178, 316], [166, 319], [156, 323], [144, 327]], 2, 3, 0.2);
rough([[176, 320], [184, 315], [196, 309]], 1, 3, 0.4);
rough([[142, 328], [132, 329.5]], 1.5, 1, 0.3);
rough([[119, 329], [108, 328], [100, 327], [92, 325]], 1.8, 2, 0.3);
rough([[62, 300], [65, 303], [64, 305]], 1.5, 1, 0.2);
rough([[77, 316], [80, 318], [84, 323]], 1.5, 2, 0.3);
rough([[146, 252], [149, 254], [152, 257]], 1.5, 2, 0.1);
rough([[136, 272], [138, 274]], 1, 0, 0);
add(coast, "path", { d: "M67 304h1M72 311h1M85 320h2M139 298h1M140 303h2M88 324l2 2", "stroke-width": 1 });
```
